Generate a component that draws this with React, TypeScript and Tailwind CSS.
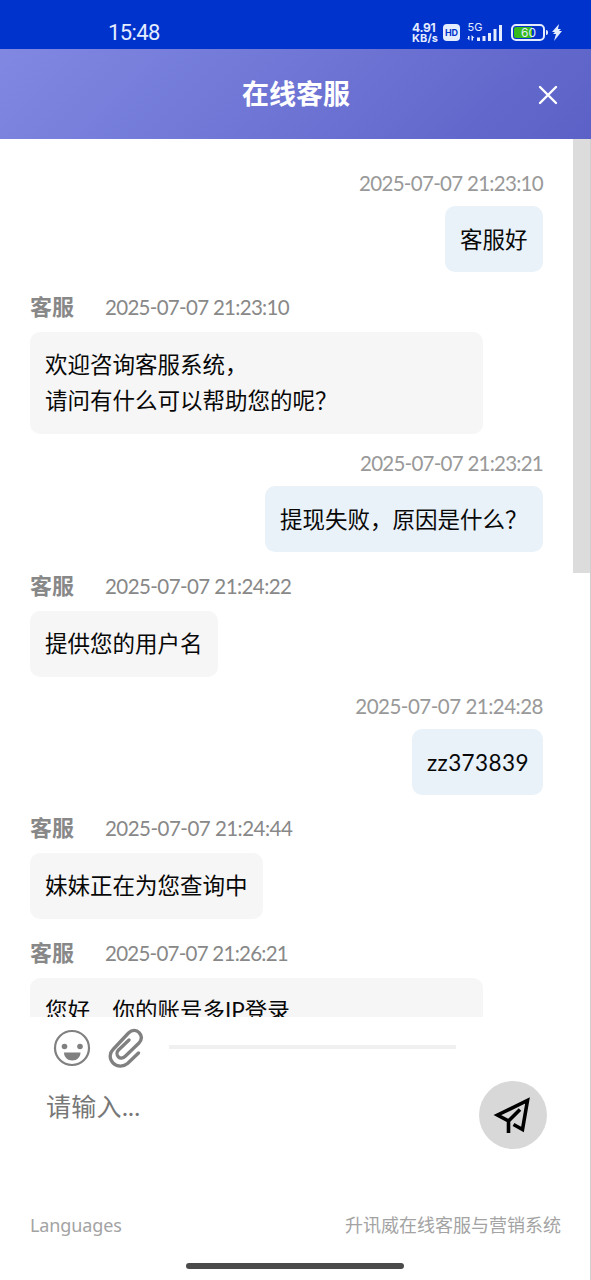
import React from "react";

type Message = {
  from: "agent" | "user";
  time: string;
  lines: string[];
  head: string;
  tracking: string;
  bubble: string;
};

const messages: Message[] = [
  { from: "user", time: "2025-07-07 21:23:10", lines: ["客服好"], head: "h-[67px]", tracking: "tracking-[-0.7px]", bubble: "w-[98px]" },
  { from: "agent", time: "2025-07-07 21:23:10", lines: ["欢迎咨询客服系统，", "请问有什么可以帮助您的呢？"], head: "h-[60px]", tracking: "tracking-[-0.7px]", bubble: "w-[453px]" },
  { from: "user", time: "2025-07-07 21:23:21", lines: ["提现失败，原因是什么？"], head: "h-[52px]", tracking: "tracking-[-0.75px]", bubble: "w-[278px]" },
  { from: "agent", time: "2025-07-07 21:24:22", lines: ["提供您的用户名"], head: "h-[59px]", tracking: "tracking-[-0.57px]", bubble: "w-[188px]" },
  { from: "user", time: "2025-07-07 21:24:28", lines: ["zz373839"], head: "h-[52px]", tracking: "tracking-[-0.5px]", bubble: "w-[131px]" },
  { from: "agent", time: "2025-07-07 21:24:44", lines: ["妹妹正在为您查询中"], head: "h-[58px]", tracking: "tracking-[-0.52px]", bubble: "w-[233px]" },
  { from: "agent", time: "2025-07-07 21:26:21", lines: ["您好　你的账号多IP登录"], head: "h-[59px]", tracking: "tracking-[-0.75px]", bubble: "w-[453px]" },
];

function StatusBar() {
  return (
    <div className="flex h-[49px] shrink-0 items-start bg-[#0033cc] pl-[108px] pt-[22px] text-[#e4ecff]">
      <span className="w-[304px] font-['Roboto',sans-serif] text-[22px] leading-[22px] tracking-[-0.6px]">15:48</span>
      <div className="flex w-[31px] flex-col whitespace-nowrap font-['Inter',sans-serif] font-bold">
        <span className="text-[12px] leading-[11px] tracking-[-0.3px]">4.91</span>
        <span className="text-[11px] leading-[11px] tracking-[0.1px]">KB/s</span>
      </div>
      <span className="mt-[2px] flex h-[17px] w-[17px] items-center justify-center rounded-[4px] bg-[#e4ecff] font-['Inter',sans-serif] text-[9px] font-bold tracking-[-0.2px] text-[#0033cc]">HD</span>
      <svg className="ml-[7px] overflow-visible" width="36" height="20" viewBox="0 0 36 20" fill="currentColor">
        <text x="0.5" y="9" fontFamily="Inter, sans-serif" fontSize="11">5G</text>
        <path d="M1 14h1.500v4.500L0 16h1zM4.500 18.500V13L7.500 16H6v2.500zM10 15.500h3v3.500h-3zM15.500 14h3v5h-3zM21 11h3v8h-3zM26.500 7h3v12h-3zM32 3h3v16h-3z" />
      </svg>
      <div className="ml-[8px] mt-[2px] flex h-[17px] w-[34px] rounded-[5px] border-2 border-[#e4ecff] p-px">
        <div className="flex w-[18px] items-center rounded-l-[2px] bg-[#35b91d] pl-[7px] font-['Inter',sans-serif] text-[12px] leading-[11px]">60</div>
      </div>
      <span className="ml-px mt-[8px] h-[5px] w-[2px] rounded-r bg-[#e4ecff]" />
      <svg className="ml-[4px] mt-px" width="10" height="19" viewBox="0 0 10 19" fill="currentColor">
        <path d="M7 1 0 9h3l-2 2h3l-2 7 8-10H7l2-2H6z" />
      </svg>
    </div>
  );
}

function ChatMessage({ m }: { m: Message }) {
  const user = m.from === "user";
  return (
    <div className={`flex flex-col ${user ? "items-end" : "items-start"}`}>
      <div className={`${m.head} flex items-end ${user ? "pb-[10px] text-[#999]" : "pb-[12px] text-[#888]"}`}>
        {!user && <span className="w-[75px] text-[22px] font-bold leading-[27px]">客服</span>}
        <span className={`${m.tracking} whitespace-nowrap text-[20.5px] leading-[26px]`}>{m.time}</span>
      </div>
      <div className={`${m.bubble} rounded-[10px] px-[15px] text-[22.5px] leading-[36px] text-[#080808] ${user ? "bg-[#e9f2f9] pb-[14px] pt-[16px]" : "bg-[#f6f6f6] py-[15px]"}`}>
        {m.lines.map((line, i) => (
          <div key={i} className={`h-[36px] whitespace-nowrap ${line.startsWith("zz") ? "tracking-[0.4px]" : ""}`}>{line}</div>
        ))}
      </div>
    </div>
  );
}

export default function App() {
  return (
    <div className="flex h-[1280px] w-[591px] flex-col overflow-hidden bg-white font-['Lato','Noto_Sans_CJK_SC',sans-serif]">
      <StatusBar />
      <header className="flex h-[90px] shrink-0 items-center bg-[linear-gradient(135deg,#8088e2,#5b61c6)] text-white">
        <h1 className="flex-1 pl-[54px] text-center text-[27px] font-bold leading-[36px]">在线客服</h1>
        <svg className="mr-[33px] mt-px" width="20" height="20" viewBox="0 0 20 20" fill="none" stroke="currentColor" strokeWidth="2.4" strokeLinecap="round">
          <path d="M2 2 18 18M18 2 2 18" />
        </svg>
      </header>
      <div className="flex min-h-0 flex-1 flex-col border-r border-[#cfcfcf]">
        <main className="flex h-[878px] shrink-0 overflow-hidden">
          <div className="w-[573px] shrink-0 pl-[30px] pr-[30px]">
            {messages.map((m, i) => <ChatMessage key={i} m={m} />)}
          </div>
          <div className="h-[434px] w-[17px] bg-[#dcdcdc]" />
        </main>
        <div className="flex h-[61px] shrink-0 items-center pl-[53px]">
          <svg width="38" height="38" viewBox="0 0 38 38" fill="#808080">
            <circle cx="19" cy="19" r="17" fill="none" stroke="#808080" strokeWidth="2.2" />
            <circle cx="11.500" cy="17.500" r="2.800" />
            <circle cx="27" cy="17.500" r="2.800" />
            <path d="M11 23.500h16.500c0 4.500-3.500 8-8.250 8s-8.250-3.500-8.250-8Z" />
          </svg>
          <svg className="ml-[17px]" width="36" height="40" viewBox="0 0 36 40" fill="none" stroke="#808080" strokeWidth="3.300" strokeLinecap="round" strokeLinejoin="round">
            <path d="M30.500 25 19.500 35.500C15.500 39 9 39 5 35C1 31 1.500 25 5 21.500L20.500 5C24 1.500 28.500 1.500 31 4.500C34.500 8 33.500 12 31 15L17.500 28C15 30.500 12 30.500 10.500 29C8.500 27 8.500 24 10.500 22L21 12" />
          </svg>
          <div className="mb-[2px] ml-[25px] h-[4px] w-[287px] bg-[#f0f0f0]" />
        </div>
        <div className="flex h-[124px] shrink-0 items-start pl-[46px] pt-[3px]">
          <span className="w-[432.5px] pt-[7px] text-[25px] leading-[36px] tracking-[0.3px] text-[#777]">请输入...</span>
          <button className="flex size-[68px] items-center justify-center rounded-full bg-[#d8d8d8]">
            <svg width="40" height="40" viewBox="0 0 40 40" fill="none" stroke="#000" strokeWidth="3.600">
              <path d="M15.500 38V26L4.500 20 34.500 5.500 29.500 34.500 20.500 29.500M15.500 26 27 14.500" />
            </svg>
          </button>
        </div>
        <footer className="flex h-[46px] shrink-0 items-center justify-between pl-[30px] pr-[29px] text-[18px] leading-[26px] text-[#a3a3a3]">
          <span className="font-['Noto_Sans',sans-serif] text-[18px] tracking-[-0.1px]">Languages</span>
          <span>升讯威在线客服与营销系统</span>
        </footer>
        <div className="ml-[186px] mt-[15px] h-[6px] w-[218px] rounded-full bg-[#4b4b4b]" />
      </div>
    </div>
  );
}
